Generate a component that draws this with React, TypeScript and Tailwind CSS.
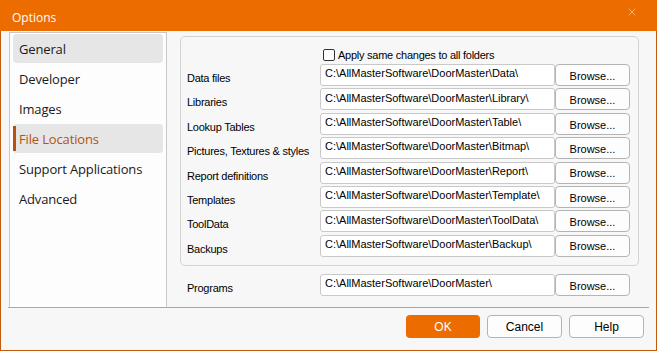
import { X } from 'lucide-react';

const nav = ['General', 'Developer', 'Images', 'File Locations', 'Support Applications', 'Advanced'];

const rows = [
  ['Data files', 'C:\\AllMasterSoftware\\DoorMaster\\Data\\'],
  ['Libraries', 'C:\\AllMasterSoftware\\DoorMaster\\Library\\'],
  ['Lookup Tables', 'C:\\AllMasterSoftware\\DoorMaster\\Table\\'],
  ['Pictures, Textures & styles', 'C:\\AllMasterSoftware\\DoorMaster\\Bitmap\\'],
  ['Report definitions', 'C:\\AllMasterSoftware\\DoorMaster\\Report\\'],
  ['Templates', 'C:\\AllMasterSoftware\\DoorMaster\\Template\\'],
  ['ToolData', 'C:\\AllMasterSoftware\\DoorMaster\\ToolData\\'],
  ['Backups', 'C:\\AllMasterSoftware\\DoorMaster\\Backup\\'],
];

function PathRow({ label, path }: { label: string; path: string }) {
  return (
    <div className="flex h-[22px] items-start">
      <div className="w-[140px] pl-[7px] pt-[8px] leading-[12px] tracking-[-0.25px] text-black">{label}</div>
      <div className="flex h-[22px] w-[235px] items-center rounded-[3px] border border-[#c9c9c9] bg-white pl-[4px] pb-[3px] text-black">
        {path}
      </div>
      <button className="h-[22px] w-[75px] rounded-[4px] border border-[#b4b4b4] bg-[#fdfdfd] pt-[2px] text-black">
        Browse...
      </button>
    </div>
  );
}

export default function App() {
  return (
    <div className="flex h-[351px] w-[657px] flex-col border-x border-b border-[#c15a0a] bg-[#f7f7f7] font-['Liberation_Sans',sans-serif] text-[11px]">
      {/* title bar */}
      <div className="-mx-[1px] flex h-[31px] shrink-0 justify-between bg-[#ec6c00] pl-[12px] pr-[19px]">
        <span className="pt-[9px] font-['Open_Sans',sans-serif] text-[12px] text-white">Options</span>
        <X className="mt-[6px] h-[12px] w-[12px] text-[#fbe0c8]" strokeWidth={1.3} />
      </div>

      <div className="flex h-[276px] shrink-0">
        {/* nav */}
        <div className="ml-[8px] mt-[1px] w-[158px] border-x border-t border-[#c8c8c8] bg-[#fdfdfd] px-[3px] pt-[1px] font-['Open_Sans',sans-serif] text-[13px] tracking-[-0.15px] text-[#1a1a1a]">
          {nav.map((n) => {
            const general = n === 'General';
            const sel = n === 'File Locations';
            return (
              <div
                key={n}
                className={
                  'relative mb-[1px] flex h-[29px] items-center rounded-[4px] pl-[6px] pt-[2px] ' +
                  (general || sel ? 'bg-[#e6e6e6] ' : '') +
                  (sel ? 'text-[#b5520e]' : '')
                }
              >
                {sel && <div className="absolute left-0 top-[2px] h-[25px] w-[3px] bg-[#b5520e]" />}
                {n}
              </div>
            );
          })}
        </div>

        {/* right side */}
        <div className="ml-[13px] flex flex-col">
          <div className="mt-[5px] h-[230px] w-[459px] rounded-[5px] border border-[#d3d3d3] pt-[11px]">
            <div className="ml-[142px] flex h-[14px] items-center gap-[3px] tracking-[-0.25px] text-black">
              <div className="h-[12px] w-[12px] rounded-[2px] border border-[#333] bg-white" />
              <span>Apply same changes to all folders</span>
            </div>
            <div className="-ml-[1px] mt-[2px] flex flex-col gap-[2.4px]">
              {rows.map(([l, p]) => (
                <PathRow key={l} label={l} path={p} />
              ))}
            </div>
          </div>
          <div className="mt-[8px]">
            <PathRow label="Programs" path="C:\AllMasterSoftware\DoorMaster\" />
          </div>
        </div>
      </div>

      {/* footer */}
      <div className="mx-[7px] border-t border-[#a9a9a9]" />
      <div className="flex justify-end gap-[7px] pr-[12px] pt-[7px]">
        <button className="h-[23px] w-[74px] rounded-[4px] bg-[#ec6c00] text-[12px] text-white">OK</button>
        <button className="h-[23px] w-[75px] rounded-[4px] border border-[#b4b4b4] bg-[#fdfdfd] text-[12px] text-black">Cancel</button>
        <button className="h-[23px] w-[75px] rounded-[4px] border border-[#b4b4b4] bg-[#fdfdfd] text-[12px] text-black">Help</button>
      </div>
    </div>
  );
}
